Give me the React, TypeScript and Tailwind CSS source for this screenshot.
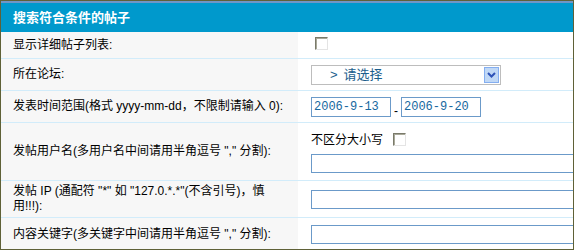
const LABEL_FONT = { fontFamily: '"Liberation Sans", "Noto Sans CJK SC", sans-serif' };

function Checkbox() {
  return (
    <span className="inline-block w-[13px] h-[13px] bg-white border border-t-[#7a7a6a] border-l-[#7a7a6a] border-r-[#e4e4e4] border-b-[#e4e4e4] shadow-[inset_1px_1px_0_#a9a99a]" />
  );
}

function Row({ label, children, h }: { label: React.ReactNode; children: React.ReactNode; h: string }) {
  return (
    <div className={`flex border-b border-[#d2ecfa] last:border-b-0 ${h}`}>
      <div className="w-[297px] shrink-0 bg-[#f7f7f7] pl-3 flex items-center text-[12px] leading-[15px] text-black">
        {label}
      </div>
      <div className="flex-1 min-w-0 pl-[13px] flex flex-col justify-center bg-white">{children}</div>
    </div>
  );
}

function TextBox() {
  return <div className="w-[300px] h-[19px] shrink-0 border border-[#6b9ac9] bg-white" />;
}

function DateBox({ value }: { value: string }) {
  return (
    <div
      className="w-[80px] h-[20px] border border-[#6b9ac9] pl-[2px] flex items-center text-[12px] text-[#1668a0]"
      style={{ fontFamily: '"Liberation Mono", monospace' }}
    >
      {value}
    </div>
  );
}

export default function App() {
  return (
    <div className="w-[574px] h-[250px] border border-[#5f6137] overflow-hidden bg-white" style={LABEL_FONT}>
      <div className="h-[31px] bg-[#0099cc] border-t-2 border-[#7096c6] pl-3 flex items-center">
        <span className="text-white text-[13px] font-bold">搜索符合条件的帖子</span>
      </div>

      <Row label="显示详细帖子列表:" h="h-[27px]">
        <div className="pl-[4px]">
          <Checkbox />
        </div>
      </Row>

      <Row label="所在论坛:" h="h-[32px]">
        <div className="w-[190px] h-[20px] border border-[#bdbdbd] flex items-center pl-[18px] pr-[1px]">
          <span className="text-[#1b5e8c] text-[13px] flex-1 leading-none">
            <span className="mr-[6px]">&gt;</span>请选择
          </span>
          <span className="w-[15px] h-[16px] bg-[#c0d8f6] border border-[#84aef0] flex items-center justify-center">
            <svg width="9" height="6" viewBox="0 0 9 6">
              <path d="M1 1 L4.5 4.5 L8 1" stroke="#2d52b8" strokeWidth="2" fill="none" />
            </svg>
          </span>
        </div>
      </Row>

      <Row label="发表时间范围(格式 yyyy-mm-dd，不限制请输入 0):" h="h-[32px]">
        <div className="flex items-end gap-[3px]">
          <DateBox value="2006-9-13" />
          <span className="text-[12px] leading-[12px] text-black">-</span>
          <DateBox value="2006-9-20" />
        </div>
      </Row>

      <Row label="发帖用户名(多用户名中间请用半角逗号 &quot;,&quot; 分割):" h="h-[58px]">
        <div className="flex items-center gap-[10px] text-[12px] text-black mb-[5px]">
          <span>不区分大小写</span>
          <Checkbox />
        </div>
        <TextBox />
      </Row>

      <Row
        label={
          <span>
            发帖 IP (通配符 "*" 如 "127.0.*.*"(不含引号)，慎
            <br />
            用!!!):
          </span>
        }
        h="h-[37px]"
      >
        <TextBox />
      </Row>

      <Row label='内容关键字(多关键字中间请用半角逗号 "," 分割):' h="h-[32px]">
        <TextBox />
      </Row>
    </div>
  );
}
